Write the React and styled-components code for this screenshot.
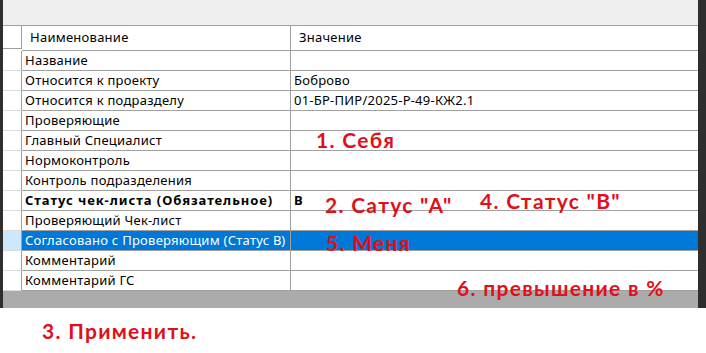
import React from "react";
import styled, { createGlobalStyle } from "styled-components";

const Global = createGlobalStyle`
  html, body { margin: 0; padding: 0; background: #ffffff; }
  body { font-family: "Noto Sans", "Liberation Sans", sans-serif; }
`;

const Page = styled.div`
  position: relative;
  width: 706px;
  height: 353px;
  background: #fff;
  overflow: hidden;
`;

const Window = styled.div`
  display: flex;
  height: 308px;
`;

const Strip = styled.div`
  width: ${(p) => p.$w}px;
  flex: none;
  background: #2e2e2e;
`;

const Main = styled.div`
  flex: 1;
  display: flex;
  flex-direction: column;
  min-width: 0;
`;

const TopBar = styled.div`
  height: 25px;
  background: #efefef;
  border-bottom: 1px solid #a0a0a0;
  flex: none;
`;

const Grid = styled.div`
  display: grid;
  grid-template-columns: 19px 269px 1fr;
  flex: none;
`;

const RowHead = styled.div`
  height: ${(p) => (p.$header ? 22 : 19)}px;
  border-right: 1px solid #a0a0a0;
  border-bottom: 1px solid ${(p) => (p.$header ? "#a0a0a0" : "#dcdcdc")};
  background: ${(p) => (p.$selected ? "#cce8ff" : "#ffffff")};
`;

const Cell = styled.div`
  height: ${(p) => (p.$header ? 22 : 19)}px;
  border-right: ${(p) => (p.$last ? "none" : "1px solid #a0a0a0")};
  border-bottom: 1px solid #a0a0a0;
  background: ${(p) => (p.$selected ? "#0078d7" : "#ffffff")};
  color: ${(p) => (p.$selected ? "#ffffff" : "#000000")};
  font-size: 13px;
  font-weight: ${(p) => (p.$bold ? 700 : 400)};
  letter-spacing: ${(p) => (p.$bold ? "0.95px" : "0.25px")};
  line-height: 19px;
  padding: ${(p) => (p.$header ? "2px 0 0 8px" : "0 0 0 3px")};
  white-space: nowrap;
  overflow: hidden;
  box-sizing: content-box;
`;

const BottomBar = styled.div`
  flex: 1;
  background: #ababab;
`;

const Note = styled.div`
  position: absolute;
  left: ${(p) => p.$x}px;
  top: ${(p) => p.$y}px;
  color: #e0101a;
  font-family: Lato, "Open Sans", sans-serif;
  font-weight: 700;
  font-size: 21px;
  letter-spacing: 1.3px;
  line-height: 1;
  white-space: nowrap;
`;

const rows = [
  { name: "Название", value: "" },
  { name: "Относится к проекту", value: "Боброво" },
  { name: "Относится к подразделу", value: "01-БР-ПИР/2025-Р-49-КЖ2.1" },
  { name: "Проверяющие", value: "" },
  { name: "Главный Специалист", value: "" },
  { name: "Нормоконтроль", value: "" },
  { name: "Контроль подразделения", value: "" },
  { name: "Статус чек-листа (Обязательное)", value: "В", bold: true },
  { name: "Проверяющий Чек-лист", value: "" },
  { name: "Согласовано с Проверяющим (Статус В)", value: "", selected: true },
  { name: "Комментарий", value: "" },
  { name: "Комментарий ГС", value: "" },
];

const notes = [
  { x: 316, y: 129, text: "1. Себя" },
  { x: 325, y: 194, text: "2. Сатус \"А\"" },
  { x: 480, y: 190, text: "4. Статус \"В\"" },
  { x: 326, y: 232, text: "5. Меня" },
  { x: 457, y: 277, text: "6. превышение в %" },
  { x: 42, y: 320, text: "3. Применить." },
];

export default function App() {
  return (
    <Page>
      <Global />
      <Window>
        <Strip $w={3} />
        <Main>
          <TopBar />
          <Grid>
            <RowHead $header />
            <Cell $header>Наименование</Cell>
            <Cell $header $last>Значение</Cell>
            {rows.map((r) => (
              <React.Fragment key={r.name}>
                <RowHead $selected={r.selected} />
                <Cell $selected={r.selected} $bold={r.bold}>
                  {r.name}
                </Cell>
                <Cell $selected={r.selected} $bold={r.bold} $last>
                  {r.value}
                </Cell>
              </React.Fragment>
            ))}
          </Grid>
          <BottomBar />
        </Main>
        <Strip $w={8} />
      </Window>
      {notes.map((n) => (
        <Note key={n.text} $x={n.x} $y={n.y}>
          {n.text}
        </Note>
      ))}
    </Page>
  );
}
